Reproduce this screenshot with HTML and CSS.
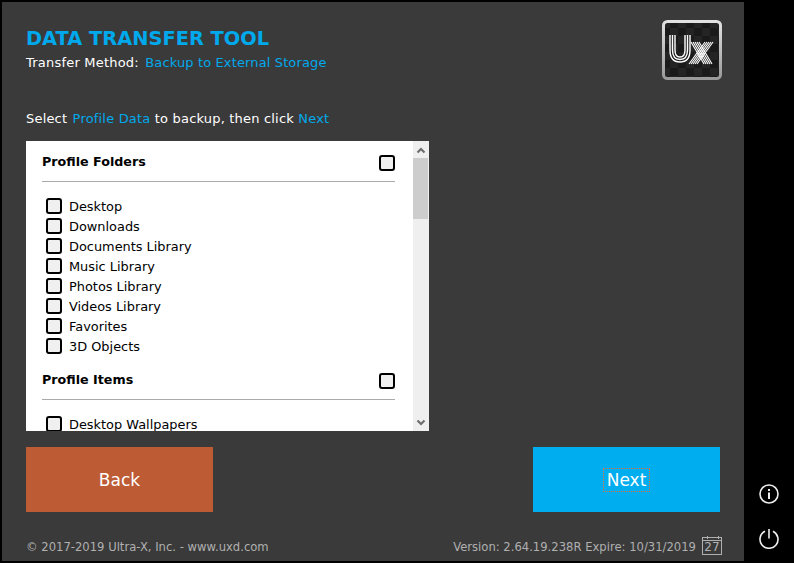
FILE: index.html
```html
<!DOCTYPE html>
<html lang="en">
<head>
<meta charset="utf-8">
<title>Data Transfer Tool</title>
<link rel="stylesheet" href="styles.css">
</head>
<body>
<div class="app">
  <main class="panel">
    <header class="head">
      <div class="titles">
        <h1 class="title">DATA TRANSFER TOOL</h1>
        <p class="method">Transfer Method: <span class="accent">Backup to External Storage</span></p>
      </div>
      <div class="logo">
        <svg class="logo-svg" viewBox="0 0 60 60" width="60" height="60" aria-hidden="true">
          <defs>
            <pattern id="chk" width="16" height="16" patternUnits="userSpaceOnUse">
              <rect width="16" height="16" fill="#1a1a1a"/>
              <rect width="8" height="8" fill="#242424"/>
              <rect x="8" y="8" width="8" height="8" fill="#242424"/>
            </pattern>
            <linearGradient id="rim" x1="0" y1="0" x2="0" y2="1">
              <stop offset="0" stop-color="#e2e2e2"/>
              <stop offset="1" stop-color="#9a9a9a"/>
            </linearGradient>
          </defs>
          <rect x="1.500" y="1.500" width="57" height="57" rx="4" fill="url(#chk)" stroke="url(#rim)" stroke-width="3"/>
          <g fill="none" stroke="#fff" stroke-width="1.400">
            <path d="M8 15V30C8 38.500 12 42 18 42C24 42 28 38.500 28 30V15"/>
            <path d="M10.500 15V30C10.500 36.500 13.500 39.500 18 39.500C22.500 39.500 25.500 36.500 25.500 30V15"/>
            <path d="M13 15V30C13 34.500 15 37 18 37C21 37 23 34.500 23 30V15"/>
          </g>
          <g fill="none" stroke="#fff" stroke-width="1.100">
            <path d="M29 22 42 44M31 22 44 44M33 22 46 44M35 22 48 44M37 22 50 44"/>
            <path d="M43 22 27 44M45 22 29 44M47 22 31 44M49 22 33 44M51 22 35 44"/>
          </g>
        </svg>
      </div>
    </header>

    <p class="prompt">Select <span class="accent accent-first">Profile Data</span> to backup, then click <span class="accent">Next</span></p>

    <section class="listbox">
      <div class="list">
        <div class="group-head"><h2 class="group-title">Profile Folders</h2><span class="box"></span></div>
        <ul class="items">
          <li class="item"><span class="box"></span>Desktop</li>
          <li class="item"><span class="box"></span>Downloads</li>
          <li class="item"><span class="box"></span>Documents Library</li>
          <li class="item"><span class="box"></span>Music Library</li>
          <li class="item"><span class="box"></span>Photos Library</li>
          <li class="item"><span class="box"></span>Videos Library</li>
          <li class="item"><span class="box"></span>Favorites</li>
          <li class="item"><span class="box"></span>3D Objects</li>
        </ul>
        <div class="group-head"><h2 class="group-title">Profile Items</h2><span class="box"></span></div>
        <ul class="items">
          <li class="item"><span class="box"></span>Desktop Wallpapers</li>
        </ul>
      </div>
      <div class="scrollbar">
        <svg class="arrow" viewBox="0 0 16 17" width="16" height="17" aria-hidden="true"><path d="M4.500 11.500 8 8 11.500 11.500" fill="none" stroke="#6e6e6e" stroke-width="2.200"/></svg>
        <div class="thumb"></div>
        <div class="track"></div>
        <svg class="arrow" viewBox="0 0 16 17" width="16" height="17" aria-hidden="true"><path d="M4.500 6.500 8 10 11.500 6.500" fill="none" stroke="#6e6e6e" stroke-width="2.200"/></svg>
      </div>
    </section>

    <div class="actions">
      <button class="btn btn-back" type="button">Back</button>
      <button class="btn btn-next" type="button"><span class="focus">Next</span></button>
    </div>

    <footer class="foot">
      <span>© 2017-2019 Ultra-X, Inc. - www.uxd.com</span>
      <div class="version">
        <span>Version: 2.64.19.238R Expire: 10/31/2019</span>
        <div class="cal"><span class="cal-day">27</span></div>
      </div>
    </footer>
  </main>

  <aside class="rail">
    <svg viewBox="0 0 22 22" width="22" height="22" aria-hidden="true">
      <circle cx="11" cy="11" r="9" fill="none" stroke="#eee" stroke-width="1.600"/>
      <rect x="10" y="9.500" width="2" height="6.500" fill="#eee"/>
      <rect x="10" y="6" width="2" height="2" fill="#eee"/>
    </svg>
    <svg viewBox="0 0 22 22" width="22" height="22" aria-hidden="true">
      <path d="M7 4.200A9 9 0 1 0 15 4.200" fill="none" stroke="#eee" stroke-width="1.600"/>
      <path d="M11 2V11.500" fill="none" stroke="#eee" stroke-width="1.600"/>
    </svg>
  </aside>
</div>
</body>
</html>
```
FILE: styles.css
```css
* { box-sizing: border-box; }
html, body { margin: 0; padding: 0; background: #000; }
body { width: 794px; height: 563px; overflow: hidden; font-family: "DejaVu Sans", Verdana, sans-serif; font-size: 13px; }
.app { display: flex; height: 563px; padding: 2px 0 2px 2px; }
.panel { width: 742px; height: 559px; background: #3a3a3a; padding: 0 22px 0 24px; display: flex; flex-direction: column; color: #fff; }
.head { display: flex; justify-content: space-between; height: 109px; padding-top: 18px; }
.title { margin: 0; padding-top: 1px; font-size: 19.400px; line-height: 36px; font-weight: 700; color: #00a9ec; }
.method { margin: -2px 0 0; line-height: 16px; letter-spacing: 0.210px; }
.method .accent { margin-left: 2px; letter-spacing: 0.130px; }
.accent { color: #00a9ec; }
.logo { width: 60px; height: 60px; }
.logo-svg { display: block; }
.prompt { margin: 0; line-height: 16px; letter-spacing: 0.190px; }
.accent-first { margin-left: 1px; }
.listbox { display: flex; width: 403px; height: 290px; margin-top: 14px; background: #fff; color: #000; }
.list { flex: 1; min-width: 0; height: 290px; overflow: hidden; padding: 0 18px 0 16px; font-size: 12.900px; }
.group-head { display: flex; justify-content: space-between; align-items: center; height: 41px; border-bottom: 1px solid #aaa; }
.group-head .box { margin-top: 4px; }
.group-title { margin: 0; font-size: 12.700px; font-weight: 700; }
.items { list-style: none; margin: 0; padding: 15px 0 2px 4px; }
.item { display: flex; align-items: center; height: 20px; line-height: 20px; }
.item .box { margin: -2px 7px 0 0; }
.box { flex: none; width: 16px; height: 16px; border: 2px solid #000; border-radius: 3px; background: #f0f0f0; }
.scrollbar { width: 16px; height: 290px; background: #efefef; display: flex; flex-direction: column; }
.arrow { display: block; flex: none; }
.thumb { height: 61px; width: 15px; background: #cdcdcd; }
.track { flex: 1; }
.actions { display: flex; justify-content: space-between; width: 694px; margin-top: 16px; }
.btn { width: 187px; height: 65px; border: 0; font-family: inherit; font-size: 17px; color: #fff; padding: 0; }
.btn-back { background: #bd5b34; }
.btn-next { background: #00adef; }
.focus { display: inline-block; padding: 0 3px; line-height: 22px; outline: 1px dotted #e8703a; }
.foot { display: flex; justify-content: space-between; align-items: center; width: 696px; height: 20px; margin-top: 25px; font-size: 11.600px; color: #b0b0b0; }
.version { display: flex; align-items: center; gap: 6px; }
.cal { position: relative; width: 20px; height: 18px; margin-bottom: 2px; border: 1px solid #b0b0b0; display: flex; align-items: flex-end; justify-content: center; }
.cal::before { content: ""; position: absolute; left: 0; right: 0; top: 2px; height: 1px; background: #b0b0b0; }
.cal::after { content: ""; position: absolute; left: 4px; top: -2px; width: 10px; height: 3px; border-left: 1px solid #b0b0b0; border-right: 1px solid #b0b0b0; }
.cal-day { font-size: 12px; line-height: 13px; }
.rail { flex: 1; display: flex; flex-direction: column; align-items: center; gap: 22px; padding-top: 481px; }
```
